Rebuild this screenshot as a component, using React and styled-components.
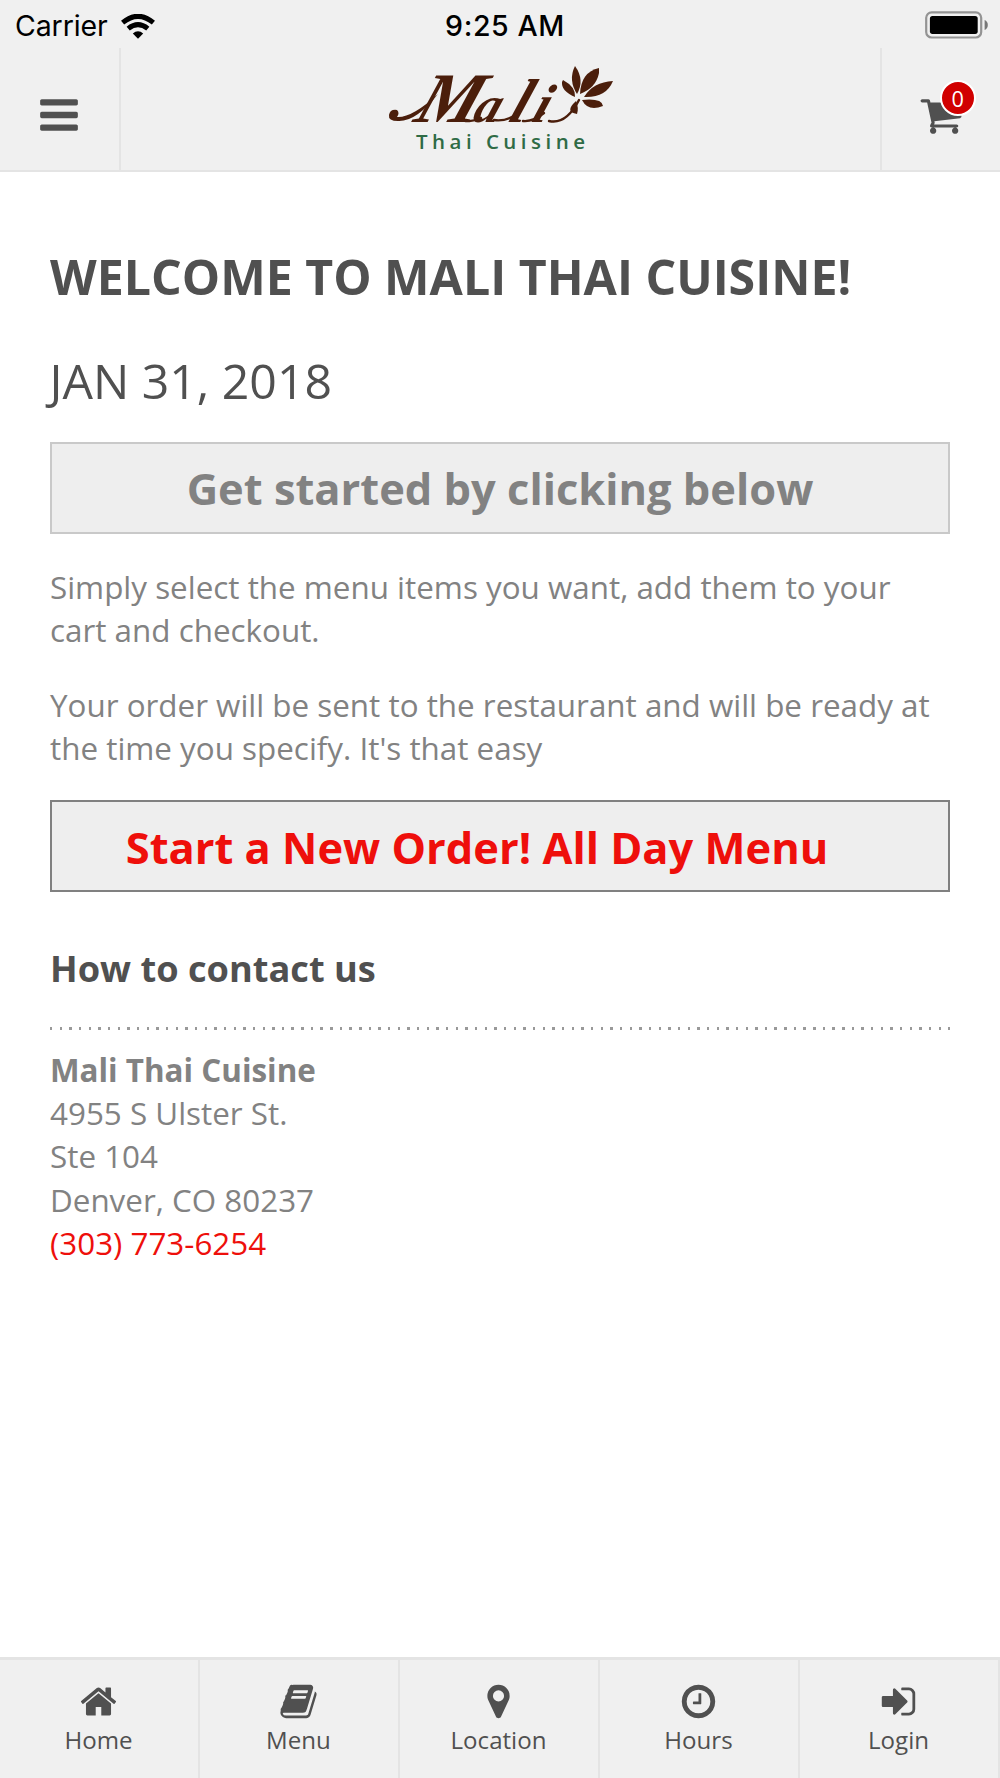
import React from 'react';
import styled, { createGlobalStyle } from 'styled-components';

const GlobalStyle = createGlobalStyle`
  * {
    box-sizing: border-box;
  }

  body {
    margin: 0;
    background: #ffffff;
    color: #828282;
    font-family: 'Open Sans', sans-serif;
  }
`;

const Screen = styled.div`
  width: 1000px;
  height: 1778px;
  display: flex;
  flex-direction: column;
  overflow: hidden;
`;

const StatusBar = styled.div`
  height: 48px;
  display: grid;
  grid-template-columns: 1fr auto 1fr;
  align-items: center;
  padding: 2px 12px 0 15px;
  background: #f0f0f0;
  color: #000000;
  font-family: Inter, sans-serif;
  font-size: 28.5px;
  line-height: 46px;
`;

const Carrier = styled.div`
  display: flex;
  align-items: center;
  gap: 13px;
  padding-top: 1px;
  letter-spacing: -0.1px;
`;

const Time = styled.div`
  padding: 1px 0 0 7px;
  font-weight: 500;
  letter-spacing: 0.6px;
`;

const Battery = styled.div`
  display: flex;
  justify-content: flex-end;
  padding-bottom: 2px;
`;

const Header = styled.header`
  height: 123.5px;
  display: flex;
  background: #f0f0f0;
  border-bottom: 2.5px solid #e4e4e4;
`;

const HeaderButton = styled.button`
  width: 120.5px;
  display: flex;
  align-items: center;
  justify-content: center;
  padding: 17px 0 4px;
  border: 0 solid #e4e4e4;
  ${(props) => (props.$side === 'left' ? 'border-right-width: 2px;' : 'border-left-width: 2px;')}
  background: transparent;
  color: #505050;
`;

const LogoLink = styled.a`
  flex: 1;
  display: flex;
  justify-content: center;
`;

const CartWrap = styled.span`
  position: relative;
  display: flex;
`;

const Badge = styled.span`
  position: absolute;
  top: -13px;
  left: 21px;
  width: 36px;
  height: 36px;
  border: 2px solid #ffffff;
  border-radius: 50%;
  background: #d10000;
  color: #ffffff;
  font-family: 'Open Sans', sans-serif;
  font-size: 21.7px;
  line-height: 33px;
  text-align: center;
`;

const Content = styled.main`
  flex: 1;
  padding: 70.5px 50px 0;
`;

const Title = styled.h1`
  margin: 0;
  color: #505050;
  font-size: 48.27px;
  line-height: 68px;
  font-weight: 700;
  text-transform: uppercase;
  white-space: nowrap;
`;

const DateLine = styled.h2`
  margin: 36px 0 28px -0.5px;
  color: #505050;
  font-size: 48.2px;
  line-height: 68px;
  font-weight: 400;
  text-transform: uppercase;
`;

const Panel = styled.div`
  height: 92px;
  display: flex;
  justify-content: center;
  border: 2px solid ${(props) => (props.$action ? '#808080' : '#c9c9c9')};
  background: #eeeeee;
  color: ${(props) => (props.$action ? '#ee0f0b' : '#828282')};
  font-size: 43.45px;
  line-height: ${(props) => (props.$action ? '91px' : '89px')};
  font-weight: 700;
  white-space: nowrap;
  ${(props) => props.$action && 'padding-right: 46px;'}
`;

const Copy = styled.div`
  padding: 30.5px 0 30.5px;
  font-size: 31.38px;
  line-height: 43.5px;

  p {
    margin: 0 0 31px;
  }

  p:last-child {
    margin-bottom: 0;
  }
`;

const ContactTitle = styled.h3`
  margin: 51px 0 34px;
  color: #505050;
  font-size: 36.2px;
  line-height: 50px;
  font-weight: 700;
`;

const DottedRule = styled.div`
  height: 3px;
  background: repeating-linear-gradient(90deg, #999999 0 2.4px, transparent 2.4px 9.66px);
`;

const Address = styled.address`
  padding-top: 17.6px;
  font-size: 31.38px;
  line-height: 43.4px;
  font-style: normal;
`;

const Phone = styled.a`
  color: #ee0f0b;
  text-decoration: none;
`;

const TabBar = styled.nav`
  height: 121px;
  display: grid;
  grid-template-columns: repeat(5, 1fr);
  border-top: 3px solid #e4e4e4;
  background: #f0f0f0;
`;

const Tab = styled.a`
  display: flex;
  flex-direction: column;
  align-items: center;
  padding: 22px 1px 0 0;
  border-right: 2px solid #e4e4e4;
  color: #505050;
  font-size: 24.1px;
  line-height: 38px;
  text-decoration: none;
`;

const ICONS = {
  bars: 'M1664 1344v128q0 26-19 45t-45 19h-1408q-26 0-45-19t-19-45v-128q0-26 19-45t45-19h1408q26 0 45 19t19 45zm0-512v128q0 26-19 45t-45 19h-1408q-26 0-45-19t-19-45v-128q0-26 19-45t45-19h1408q26 0 45 19t19 45zm0-512v128q0 26-19 45t-45 19h-1408q-26 0-45-19t-19-45v-128q0-26 19-45t45-19h1408q26 0 45 19t19 45z',
  cart: 'M704 1536q0 52-38 90t-90 38-90-38-38-90 38-90 90-38 90 38 38 90zm896 0q0 52-38 90t-90 38-90-38-38-90 38-90 90-38 90 38 38 90zm128-1088v512q0 24-16.5 42.5t-40.5 21.5l-1044 122q13 60 13 70 0 16-24 64h920q26 0 45 19t19 45-19 45-45 19h-1024q-26 0-45-19t-19-45q0-11 8-31.5t16-36 21.5-40 15.5-29.5l-177-823h-204q-26 0-45-19t-19-45 19-45 45-19h256q16 0 28.5 6.5t19.5 15.5 13 24.5 8 26 5.5 29.5 4.5 26h1201q26 0 45 19t19 45z',
  home: 'M1472 992v480q0 26-19 45t-45 19h-384v-384h-256v384h-384q-26 0-45-19t-19-45v-480q0-1 .5-3t.5-3l575-474 575 474q1 2 1 6zm223-69l-62 74q-8 9-21 11h-3q-13 0-21-7l-692-577-692 577q-12 8-24 7-13-2-21-11l-62-74q-8-10-7-23.5t11-21.5l719-599q32-26 76-26t76 26l244 204v-195q0-14 9-23t23-9h192q14 0 23 9t9 23v408l219 182q10 8 11 21.5t-7 23.5z',
  book: 'M1703 478q40 57 18 129l-275 906q-19 64-76.5 107.5t-122.5 43.5h-923q-77 0-148.5-53.5t-99.5-131.5q-24-67-2-127 0-4 3-27t4-37q1-8-3-21.5t-3-19.5q2-11 8-21t16.5-23.5 16.5-23.5q23-38 45-91.5t30-91.5q3-10 .5-30t-.5-28q3-11 17-28t17-23q21-36 42-92t25-90q1-9-2.5-32t.5-28q4-13 22-30.5t22-22.5q19-26 42.5-84.5t27.5-96.5q1-8-3-25.5t-2-26.5q2-8 9-18t18-23 17-21q8-12 16.5-30.5t15-35 16-36 19.5-32 26.5-23.5 36-11.5 47.5 5.5l-1 3q38-9 51-9h761q74 0 114 56t18 130l-274 906q-36 119-71.5 153.5t-128.5 34.5h-869q-27 0-38 15-11 16-1 43 24 70 144 70h923q29 0 56-15.5t35-41.5l300-987q7-22 5-57 38 15 59 43zm-1064 2q-4 13 2 22.5t20 9.5h608q13 0 25.5-9.5t16.5-22.5l21-64q4-13-2-22.5t-20-9.5h-608q-13 0-25.5 9.5t-16.5 22.5zm-83 256q-4 13 2 22.5t20 9.5h608q13 0 25.5-9.5t16.5-22.5l21-64q4-13-2-22.5t-20-9.5h-608q-13 0-25.5 9.5t-16.5 22.5z',
  marker: 'M1152 640q0-106-75-181t-181-75-181 75-75 181 75 181 181 75 181-75 75-181zm256 0q0 109-33 179l-364 774q-16 33-47.5 52t-67.5 19-67.5-19-46.5-52l-365-774q-33-70-33-179 0-212 150-362t362-150 362 150 150 362z',
  clock: 'M1024 544v448q0 14-9 23t-23 9h-320q-14 0-23-9t-9-23v-64q0-14 9-23t23-9h224v-352q0-14 9-23t23-9h64q14 0 23 9t9 23zm416 352q0-148-73-273t-198-198-273-73-273 73-198 198-73 273 73 273 198 198 273 73 273-73 198-198 73-273zm224 0q0 209-103 385.5t-279.5 279.5-385.5 103-385.5-103-279.5-279.5-103-385.5 103-385.5 279.5-279.5 385.5-103 385.5 103 279.5 279.5 103 385.5z',
  signIn: 'M1312 896q0 26-19 45l-544 544q-19 19-45 19t-45-19-19-45v-288h-448q-26 0-45-19t-19-45v-384q0-26 19-45t45-19h448v-288q0-26 19-45t45-19 45 19l544 544q19 19 19 45zm352-352v704q0 119-84.5 203.5t-203.5 84.5h-320q-13 0-22.5-9.5t-9.5-22.5q0-4-1-20t-.5-26.5 3-23.5 10-19.5 20.5-6.5h320q66 0 113-47t47-113v-704q0-66-47-113t-113-47h-312l-11.5-1-11.5-3-8-5.5-7-9-2-13.5q0-4-1-20t-.5-26.5 3-23.5 10-19.5 20.5-6.5h320q119 0 203.5 84.5t84.5 203.5z',
};

const tabs = [
  { label: 'Home', icon: 'home' },
  { label: 'Menu', icon: 'book' },
  { label: 'Location', icon: 'marker' },
  { label: 'Hours', icon: 'clock' },
  { label: 'Login', icon: 'signIn' },
];

const Icon = ({ name, size }) => (
  <svg width={size} height={size} viewBox="0 0 1792 1792" fill="currentColor" aria-hidden="true">
    <path d={ICONS[name]} />
  </svg>
);

const WifiIcon = () => (
  <svg width="34" height="25" viewBox="0 0 34 25" aria-hidden="true">
    <path d="M1.6 8.6Q17 -4 32.4 8.6" fill="none" stroke="#000" strokeWidth="5" />
    <path d="M7.2 14.6Q17 6.6 26.8 14.6" fill="none" stroke="#000" strokeWidth="5" />
    <path d="M17 24.8L11.8 19.6Q17 14.8 22.2 19.6Z" fill="#000" />
  </svg>
);

const BatteryIcon = () => (
  <svg width="63" height="28" viewBox="0 0 63 28" aria-hidden="true">
    <rect x="1.2" y="1.3" width="55" height="25.2" rx="5.5" fill="none" stroke="#939393" strokeWidth="2.2" />
    <rect x="4.9" y="4.9" width="47.8" height="18" rx="2.6" fill="#000" />
    <path d="M59.6 9Q62.8 10.4 62.8 14Q62.8 17.6 59.6 19Z" fill="#777" />
  </svg>
);

const Logo = () => (
  <svg width="240" height="112" viewBox="0 0 240 112" role="img" aria-label="Mali Thai Cuisine">
    <g fill="#4b1e0b">
      {/* swash leading into the brand name */}
      <path d="M9 67Q10 61 17 62Q20 65 17 69Q32 70 58 46Q36 74 18 73Q8 73 9 67Z" />
      <text
        y="74"
        fontFamily="'Liberation Serif', serif"
        fontStyle="italic"
        fontWeight="700"
        transform="translate(27 0) skewX(-20)"
      >
        <tspan x="32" fontSize="71">M</tspan>
        <tspan x="91" fontSize="51">a</tspan>
        <tspan x="127" fontSize="62">l</tspan>
        <tspan x="150" fontSize="54">i</tspan>
      </text>
      {/* flower petals */}
      <path d="M195 49Q181 43 182 34L183 32Q196 39 195 49Z" />
      <path d="M197 46Q188 32 195 18Q205 32 197 46Z" />
      <path d="M200 46Q201 24 219 20L219 25Q216 40 200 46Z" />
      <path d="M204 49Q213 34 233 33Q226 50 204 49Z" />
      <path d="M202 52Q222 50 223 58Q208 64 202 52Z" />
      <path d="M196 53Q199 60 197 66Q184 64 196 53Z" />
    </g>
    {/* hairlines joining the letters to the flower stem */}
    <g fill="none" stroke="#4b1e0b" strokeWidth="2.4" strokeLinecap="round">
      <path d="M82 72Q92 75 101 70" />
      <path d="M114 72Q126 74 139 65" />
      <path d="M143 73Q153 74 164 65" />
      <path d="M169 73Q186 77 199 52" />
    </g>
    <text
      x="36"
      y="100.5"
      fill="#2f6b45"
      fontFamily="'Open Sans', sans-serif"
      fontSize="20.5"
      fontWeight="600"
      textLength="169"
      lengthAdjust="spacing"
    >
      Thai Cuisine
    </text>
  </svg>
);

const App = () => {
  return (
    <>
      <GlobalStyle />
      <Screen>
        <StatusBar>
          <Carrier>
            Carrier
            <WifiIcon />
          </Carrier>
          <Time>9:25 AM</Time>
          <Battery>
            <BatteryIcon />
          </Battery>
        </StatusBar>

        <Header>
          <HeaderButton $side="left" aria-label="Open menu">
            <Icon name="bars" size={44} />
          </HeaderButton>
          <LogoLink>
            <Logo />
          </LogoLink>
          <HeaderButton $side="right" aria-label="Cart">
            <CartWrap>
              <Icon name="cart" size={44} />
              <Badge>0</Badge>
            </CartWrap>
          </HeaderButton>
        </Header>

        <Content>
          <Title>Welcome to Mali Thai Cuisine!</Title>
          <DateLine>Jan 31, 2018</DateLine>
          <Panel>Get started by clicking below</Panel>
          <Copy>
            <p>Simply select the menu items you want, add them to your cart and checkout.</p>
            <p>Your order will be sent to the restaurant and will be ready at the time you specify. It's that easy</p>
          </Copy>
          <Panel $action>Start a New Order! All Day Menu</Panel>
          <ContactTitle>How to contact us</ContactTitle>
          <DottedRule />
          <Address>
            <strong>Mali Thai Cuisine</strong>
            <br />
            4955 S Ulster St.
            <br />
            Ste 104
            <br />
            Denver, CO 80237
            <br />
            <Phone>(303) 773-6254</Phone>
          </Address>
        </Content>

        <TabBar>
          {tabs.map((tab) => (
            <Tab key={tab.label}>
              <Icon name={tab.icon} size={39} />
              {tab.label}
            </Tab>
          ))}
        </TabBar>
      </Screen>
    </>
  );
};

export default App;
